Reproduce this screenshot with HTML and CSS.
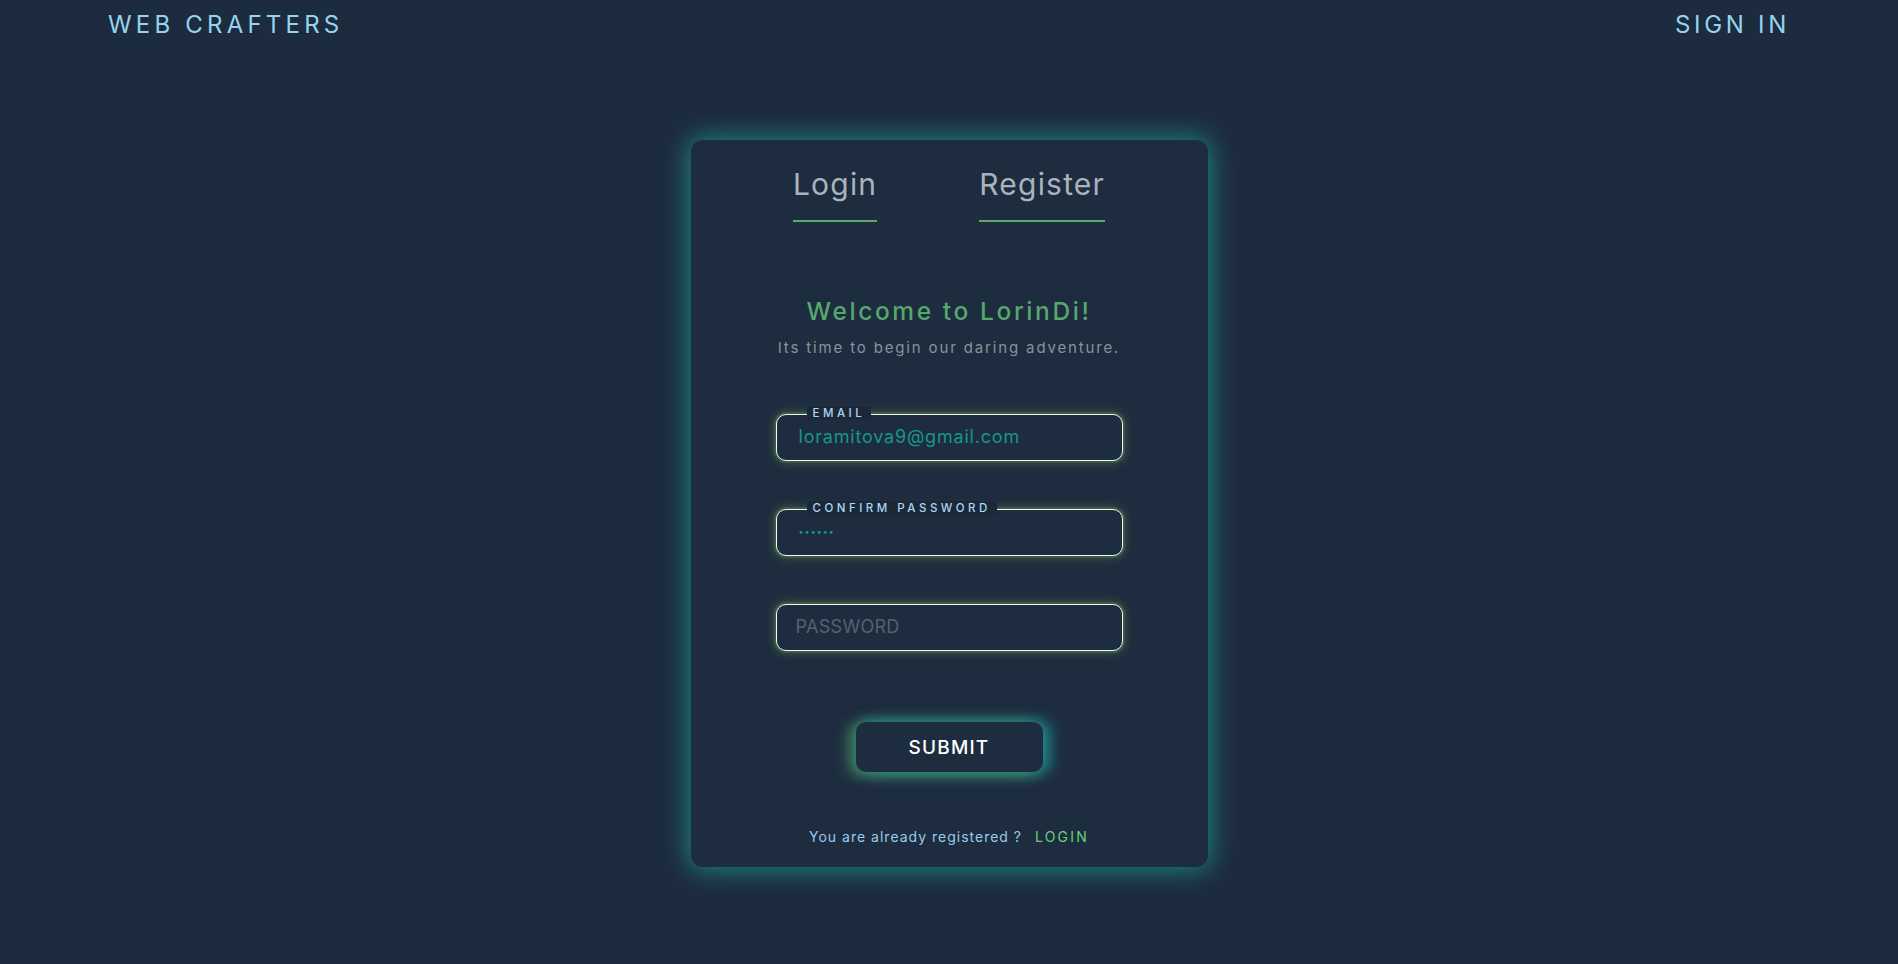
FILE: index.html
```html
<!DOCTYPE html>
<html lang="en">
<head>
<meta charset="utf-8">
<title>Web Crafters</title>
<link rel="stylesheet" href="styles.css">
</head>
<body>
<header class="topbar">
  <a class="brand" href="#">WEB CRAFTERS</a>
  <a class="signin" href="#">SIGN IN</a>
</header>
<main class="stage">
  <section class="card">
    <nav class="tabs">
      <a class="tab" href="#">Login</a>
      <a class="tab" href="#">Register</a>
    </nav>
    <div class="intro">
      <h1 class="title">Welcome to LorinDi!</h1>
      <p class="subtitle">Its time to begin our daring adventure.</p>
    </div>
    <form class="form">
      <div class="field">
        <span class="label">EMAIL</span>
        <input class="input" type="email" value="loramitova9@gmail.com">
      </div>
      <div class="field">
        <span class="label">CONFIRM PASSWORD</span>
        <input class="input pw" type="password" value="123456">
      </div>
      <div class="field">
        <input class="input plain" type="password" placeholder="PASSWORD">
      </div>
      <button class="submit" type="button">SUBMIT</button>
    </form>
    <p class="foot">You are already registered ? <a class="foot-link" href="#">LOGIN</a></p>
  </section>
</main>
</body>
</html>
```
FILE: styles.css
```css
* { box-sizing: border-box; }
html, body { margin: 0; padding: 0; }
body {
  background: #1d2b3e;
  font-family: Inter, "Open Sans", sans-serif;
  height: 964px;
  overflow: hidden;
}
a { text-decoration: none; }

.topbar {
  display: flex;
  justify-content: space-between;
  align-items: center;
  height: 40px;
  margin-top: 4px;
  padding: 0 108px 0 108px;
}
.brand, .signin {
  color: #95d3ef;
  font-size: 24px;
  letter-spacing: 4.2px;
  font-weight: 400;
}
.signin { letter-spacing: 3.7px; }

.stage {
  display: flex;
  justify-content: center;
  margin-top: 96px;
}
.card {
  width: 517px;
  height: 727px;
  background: #1e2c3f;
  border-radius: 12px;
  box-shadow: 0 0 26px 3px rgba(28, 160, 150, 0.75);
  display: flex;
  flex-direction: column;
  align-items: center;
  padding-top: 26px;
}
.tabs {
  display: flex;
  gap: 102px;
}
.tab {
  color: #aab3bd;
  font-size: 30px;
  line-height: 37px;
  letter-spacing: 1.2px;
  padding-bottom: 17px;
  border-bottom: 2px solid #5fa86b;
}
.intro {
  margin-top: 74px;
  text-align: center;
}
.title {
  margin: 0;
  color: #55a86c;
  font-size: 24.5px;
  line-height: 30px;
  font-weight: 500;
  letter-spacing: 2.6px;
}
.subtitle {
  margin: 12px 0 0;
  color: #8a929c;
  font-size: 15px;
  line-height: 20px;
  letter-spacing: 1.85px;
}
.form {
  margin-top: 56px;
  display: flex;
  flex-direction: column;
  align-items: center;
  gap: 48px;
}
.field {
  position: relative;
  width: 347px;
  height: 47px;
}
.input {
  width: 100%;
  height: 100%;
  border: 1.5px solid #f4f6f2;
  border-radius: 10px;
  background: #1e2c3f;
  color: #17968a;
  font-family: inherit;
  font-size: 18px;
  letter-spacing: 0.8px;
  padding: 0 20px 2px 22px;
  outline: none;
  box-shadow: 0 0 0 2px rgba(60, 115, 75, 0.5), 0 0 10px 2px rgba(150, 190, 90, 0.3);
}
.input.pw {
  font-size: 9px;
  letter-spacing: 1px;
  padding-top: 0;
}
.input.plain { padding-left: 19px; letter-spacing: 0.3px; }
.input::placeholder { color: #56616e; }
.label {
  position: absolute;
  top: -8px;
  left: 31px;
  z-index: 1;
  padding: 0 6px;
  background: #1c2838;
  color: #a8d8f2;
  font-size: 11.5px;
  line-height: 14px;
  letter-spacing: 3.5px;
  font-weight: 500;
  border-radius: 2px;
}
.submit {
  margin-top: 23px;
  width: 187px;
  height: 50px;
  border: none;
  border-radius: 10px;
  background: #1e2c3f;
  color: #ffffff;
  font-family: inherit;
  font-size: 19px;
  font-weight: 500;
  letter-spacing: 1.2px;
  box-shadow: -6px 2px 14px 2px rgba(80, 170, 110, 0.6), 6px 0 14px 2px rgba(25, 160, 165, 0.7);
}
.foot {
  margin: 56px 0 0;
  color: #9ccbe9;
  font-size: 14px;
  line-height: 18px;
  letter-spacing: 1px;
}
.foot-link {
  color: #6ad07a;
  margin-left: 8px;
  letter-spacing: 2.2px;
}
```
